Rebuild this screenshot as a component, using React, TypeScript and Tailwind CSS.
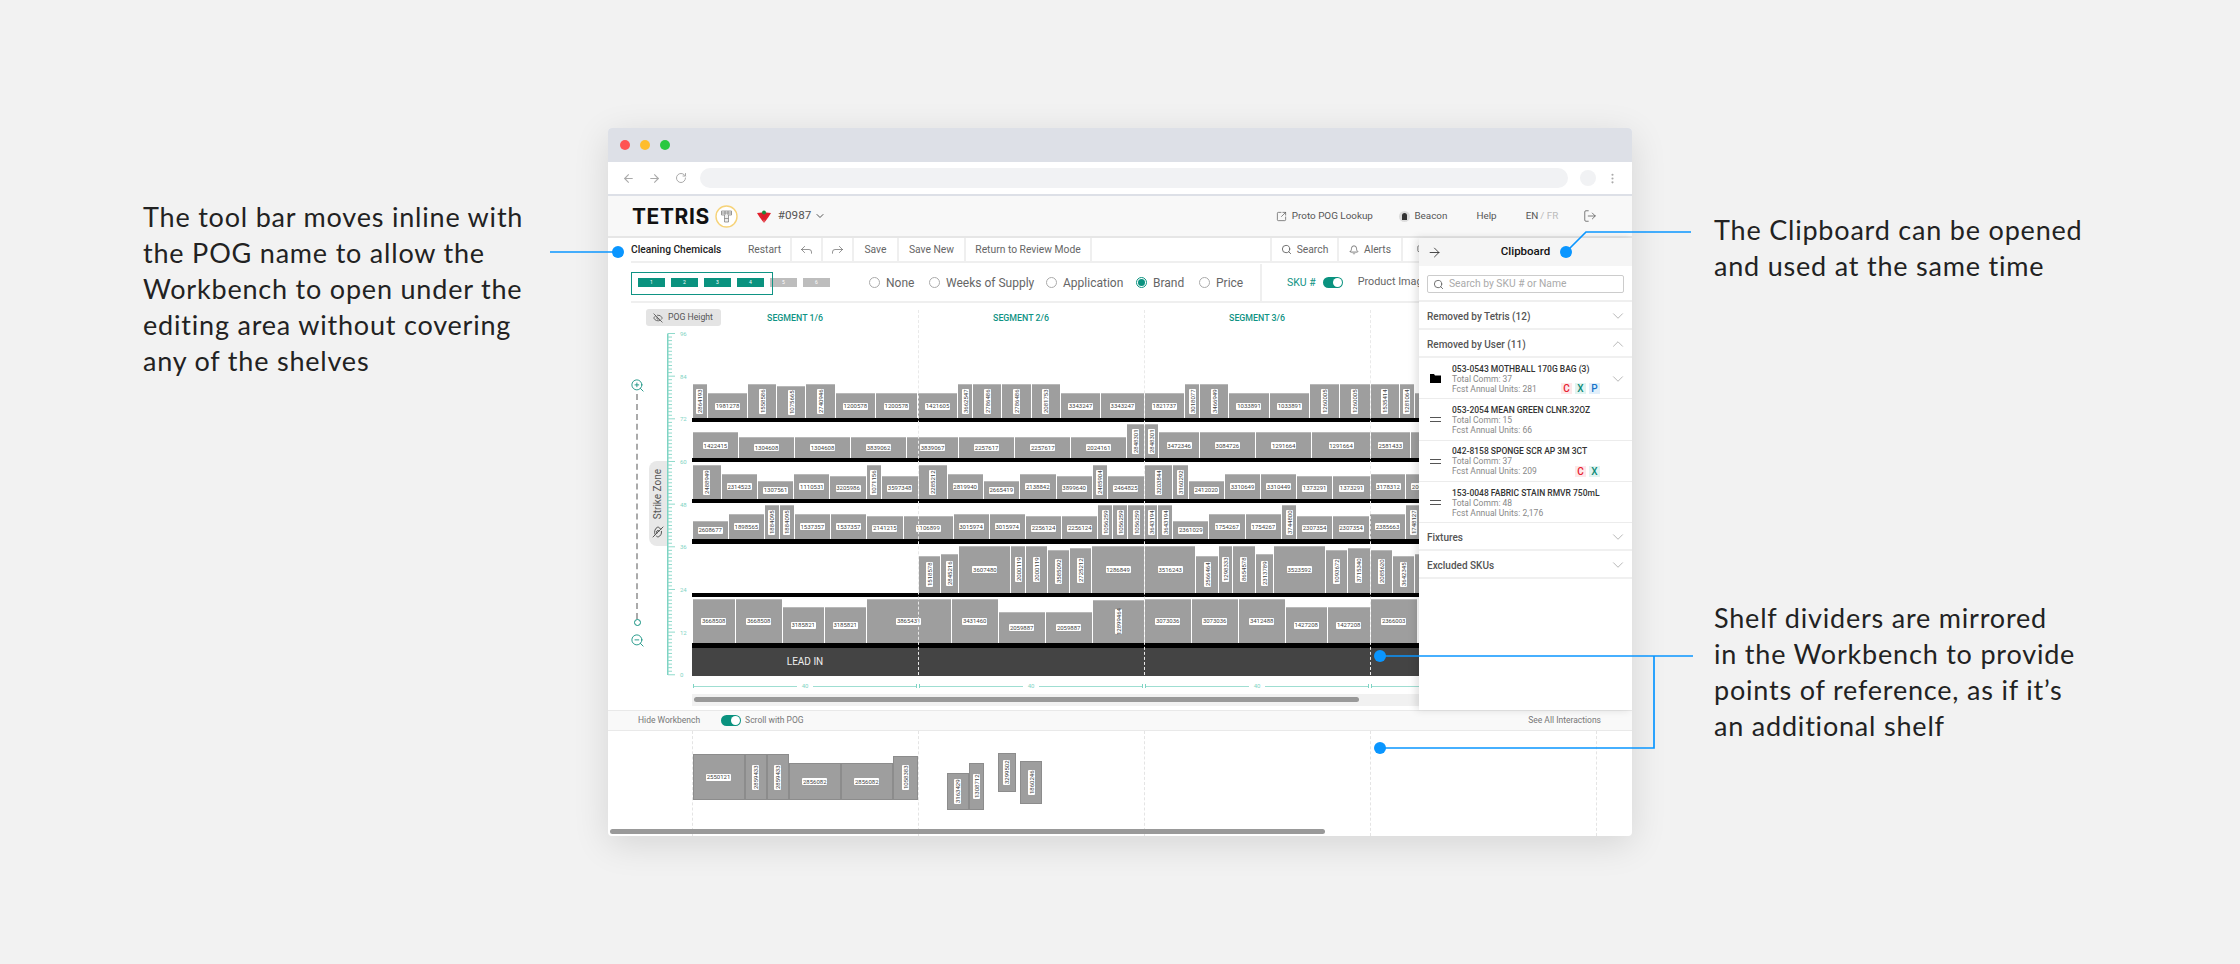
import { ArrowLeft, ArrowRight, Bell, ChevronDown, ChevronUp, Copy, EllipsisVertical, EyeOff, Forward, LogOut, Reply, RotateCw, Search, SquareArrowOutUpRight, ZoomIn, ZoomOut } from 'lucide-react'

type Bar = [number, number, string?, boolean?]

const shelves: { height: number; black: number; bars: Bar[] }[] = [
  {
    height: 85, black: 4,
    bars: [
      [15.3, 34, '2864193', true], [40, 25, '1981278'], [29.3, 34, '1558586', true], [29, 32, '1075665', true], [29.3, 34, '2740946', true], [40.3, 25, '1200578'], [42, 25, '1200578'],
      [40.3, 25, '1421605'], [15.3, 34, '3662547', true], [29, 34, '2786486', true], [29.3, 34, '2786486', true], [29.3, 34, '2081753', true], [40, 25, '3343247'], [43.7, 25, '3343247'],
      [40.3, 25, '1821737'], [15, 34, '3018077', true], [29.3, 34, '3466949', true], [40.3, 25, '1033891'], [40.7, 25, '1033891'], [29.3, 34, '1260005', true], [31, 34, '1260005', true],
      [29, 34, '1535414', true], [15.3, 34, '1281064', true], [40, 25],
    ],
  },
  {
    height: 36, black: 4,
    bars: [
      [46.3, 25.7, '1422415'], [56, 21.3, '1304608'], [56, 21.3, '1304608'], [56, 21.3, '3839062'], [52, 21.3, '3839067'], [56.3, 21.3, '2257617'], [56, 21.3, '2257617'], [56, 21.3, '2024161'], [17.5, 34, '2848301', true],
      [14.7, 34, '2848301', true], [40.3, 25.7, '3472346'], [56.3, 25.7, '3084726'], [56.3, 25.7, '1291664'], [58.4, 25.7, '1291664'],
      [40, 25.7, '2581433'], [30, 25.7],
    ],
  },
  {
    height: 37, black: 4,
    bars: [
      [29, 34, '2488949', true], [36, 25.3, '2314523'], [36.7, 18.3, '1307561'], [36, 25.3, '1110531'], [36.3, 22.7, '3205986'], [15, 34, '1071156', true], [37, 22.7, '3597348'],
      [29, 34, '2285212', true], [36, 25.3, '2819940'], [36.3, 18.3, '2665419'], [36.7, 25.3, '2138842'], [36, 22.7, '3899640'], [15, 34, '2485904', true], [37.3, 22.7, '2464825'],
      [28.3, 34, '3203844', true], [15.3, 34, '3160292', true], [36.3, 18.3, '2412020'], [36.3, 25.3, '3310649'], [36, 25.3, '3310449'], [36, 22.7, '1373291'], [38, 22.7, '1373291'],
      [35, 25.3, '3178312'], [36, 25.3, '2064471'],
    ],
  },
  {
    height: 36, black: 4.5,
    bars: [
      [36, 18.3, '2608677'], [36.3, 25.3, '1898565'], [14.7, 34, '1884095', true], [15, 34, '1884095', true], [36.3, 25.3, '1537357'], [36.3, 25.3, '1537357'], [36.3, 22.7, '2141215'], [50, 22.7, '1106899'],
      [36, 25.3, '3015974'], [36.3, 25.3, '3015974'], [36.3, 22.7, '2256124'], [36.3, 22.7, '2256124'], [15, 34, '1056259', true], [15, 34, '1056259', true], [16.7, 34, '1056259', true],
      [13, 34, '3643194', true], [15, 34, '3643194', true], [36.3, 18.3, '2361029'], [36.3, 25.3, '1754267'], [36.3, 25.3, '1754267'], [15, 34, '3744800', true], [36, 22.7, '2307354'], [37, 22.7, '2307354'],
      [36, 25.3, '2385663'], [15, 34, '1748127', true],
    ],
  },
  {
    height: 49, black: 4,
    bars: [
      [226, 0],
      [22, 37, '1518578', true], [18.7, 39, '2845216', true], [52, 46.3, '3607480'], [14.7, 46.3, '2000119', true], [22, 46.3, '2000119', true], [22, 42.7, '3585092', true], [22, 45, '2725212', true], [53, 46.3, '1286849'],
      [51.3, 46.3, '3516243'], [22.3, 37, '2566464', true], [14.7, 46.3, '1298333', true], [22.3, 46.3, '8654578', true], [18.3, 39, '2313789', true], [51.7, 46.3, '3523592'], [22.3, 43, '1093672', true], [23, 45, '3715340', true],
      [21.7, 42.7, '2085620', true], [22, 37, '3642345', true], [22, 39],
    ],
  },
  {
    height: 46, black: 5,
    bars: [
      [43, 44, '3668508'], [47, 44, '3668508'], [42, 35.3, '3185821'], [42, 35.3, '3185821'], [85, 44, '3865431'], [47, 44, '3431460'], [47, 30.3, '2059887'], [47, 30.3, '2059887'], [52, 42.7, '12899464', true],
      [47, 44, '3073036'], [47, 44, '3073036'], [47, 44, '3412488'], [42, 35.3, '1427208'], [43, 35.3, '1427208'], [47, 44, '2366003'],
    ],
  },
]

// workbench sits on a free canvas, so these keep their own place
const loose = [
  { x: 692.5, y: 754, w: 52, h: 46, label: '2550121' },
  { x: 745, y: 754, w: 21.5, h: 46, label: '2859433', v: true },
  { x: 767, y: 754, w: 21.5, h: 46, label: '2859433', v: true },
  { x: 789, y: 763, w: 51.5, h: 37, label: '2856082' },
  { x: 841, y: 763, w: 51.5, h: 37, label: '2856082' },
  { x: 893, y: 755.5, w: 25, h: 44.5, label: '1058383', v: true },
  { x: 947, y: 773, w: 21.5, h: 37, label: '3163429', v: true },
  { x: 969, y: 763, w: 14.5, h: 47, label: '1308712', v: true },
  { x: 997.5, y: 753, w: 18, h: 39, label: '3299502', v: true },
  { x: 1020, y: 761, w: 22, h: 43, label: '1860246', v: true },
]

const ticks = Array.from({ length: 97 }, (_, i) => i)

function Label({ text, v }: { text: string; v?: boolean }) {
  return (
    <span className={v
      ? 'flex w-[7px] h-[25px] items-center justify-center bg-white rounded-[1px] text-[6px] leading-none text-[#444] [writing-mode:vertical-rl] rotate-180 whitespace-nowrap'
      : 'flex w-[25px] h-[7px] items-center justify-center bg-white rounded-[1px] text-[6px] leading-none text-[#444] whitespace-nowrap'}>
      {text}
    </span>
  )
}

function Shelf({ height, black, bars }: { height: number; black: number; bars: Bar[] }) {
  return (
    <div>
      <div className="flex items-end pl-[0.7px] overflow-hidden" style={{ height }}>
        {bars.map(([w, h, label, v], i) => (
          <div key={i} className="shrink-0 pr-px" style={{ width: w, height: h }}>
            {h > 0 && (
              <div className="h-full bg-[#9e9e9e] border-t border-[#b8b8b8] flex items-center justify-center">
                {label && <Label text={label} v={v} />}
              </div>
            )}
          </div>
        ))}
      </div>
      <div className="bg-black" style={{ height: black }} />
    </div>
  )
}

function Radio({ label, on, className }: { label: string; on?: boolean; className: string }) {
  return (
    <div className={`flex items-center gap-[6px] ${className}`}>
      <span className={`w-[11px] h-[11px] rounded-full border flex items-center justify-center ${on ? 'border-[#0a927f]' : 'border-[#aaa]'}`}>
        {on && <span className="w-[7px] h-[7px] rounded-full bg-[#0a927f]" />}
      </span>
      <span className="text-[12px] text-[#666]">{label}</span>
    </div>
  )
}

function Toggle() {
  return (
    <span className="flex justify-end items-center w-[20px] h-[11px] rounded-full bg-[#0a927f] pr-px">
      <span className="w-[9px] h-[9px] rounded-full bg-white" />
    </span>
  )
}

function Cell({ children, className }: { children: React.ReactNode; className: string }) {
  return <div className={`flex items-center justify-center gap-[5px] h-full border-r-2 border-[#efefef] text-[10.3px] text-[#666] ${className}`}>{children}</div>
}

function Badge({ c }: { c: 'C' | 'X' | 'P' }) {
  const tone = c === 'C' ? 'bg-[#fde8ea] text-[#e8202e]' : c === 'X' ? 'bg-[#e2f4f1] text-[#0a8a78]' : 'bg-[#e1effb] text-[#1673c9]'
  return <span className={`w-[11px] h-[11px] flex items-center justify-center text-[10px] font-medium ${tone}`}>{c}</span>
}

function Section({ title, open }: { title: string; open?: boolean }) {
  return (
    <div className="flex items-center justify-between h-[28px] pl-[8px] pr-[5px] pt-[2px] border-b-2 border-[#f0f0f0]">
      <span className="text-[10px] font-medium text-[#555]">{title}</span>
      {open
        ? <ChevronUp size={18} strokeWidth={0.8} className="text-[#888]" />
        : <ChevronDown size={18} strokeWidth={0.8} className="text-[#888]" />}
    </div>
  )
}

function Item({ title, comm, units, folder, badges, chevron }: { title: string; comm: string; units: string; folder?: boolean; badges?: ('C' | 'X' | 'P')[]; chevron?: boolean }) {
  return (
    <div className="relative flex items-center h-[41.3px] pt-px border-b border-[#ececec] pl-[11px]">
      <span className="w-[22px]">
        {folder ? (
          <svg width="11" height="9" viewBox="0 0 11 9"><path d="M0 0h4l1 1.500h6V9H0z" fill="#000" /></svg>
        ) : (
          <span className="block w-[11px] h-[5px] border-y-[1.5px] border-[#555]" />
        )}
      </span>
      <div className="text-[8.5px] leading-[10px]">
        <div className="font-medium text-[#333] whitespace-nowrap">{title}</div>
        <div className="text-[#888]">Total Comm: {comm}</div>
        <div className="text-[#888]">Fcst Annual Units: {units}</div>
      </div>
      {badges && (
        <div className="absolute right-[32px] bottom-[4px] flex gap-[3px]">
          {badges.map(b => <Badge key={b} c={b} />)}
        </div>
      )}
      {chevron && <ChevronDown size={18} strokeWidth={0.8} className="absolute right-[5px] top-[12px] text-[#888]" />}
    </div>
  )
}

function Measure({ w }: { w: number }) {
  return (
    <div className="flex items-center shrink-0 h-[4px] border-x border-[#7fd4c4]" style={{ width: w }}>
      <span className="flex-1 h-px bg-[#9fded2]" />
      <span className="px-[5px] text-[6px] leading-none text-[#7fd4c4]">40</span>
      <span className="flex-1 h-px bg-[#9fded2]" />
    </div>
  )
}

function Annotation({ lines, className }: { lines: string[]; className: string }) {
  return (
    <div className={`font-[Lato] text-[27px] tracking-[0.8px] leading-[36px] text-[#222] whitespace-nowrap ${className}`}>
      {lines.map(l => <div key={l}>{l}</div>)}
    </div>
  )
}

export default function App() {
  return (
    <div className="relative flex w-[2240px] h-[964px] bg-[#f2f2f2] overflow-hidden font-[Roboto]">
      <div className="w-[608px] shrink-0 pl-[143px]">
        <Annotation className="mt-[199px]" lines={['The tool bar moves inline with', 'the POG name to allow the', 'Workbench to open under the', 'editing area without covering', 'any of the shelves']} />
      </div>

      {/* browser window */}
      <div className="mt-[128px] w-[1024px] h-[708px] shrink-0 flex flex-col bg-white rounded-[4px] overflow-hidden shadow-[0_8px_36px_rgba(0,0,0,0.12)]">
        <div className="flex items-center gap-[10px] h-[34px] bg-[#dde0e7] pl-[12px]">
          <span className="w-[10px] h-[10px] rounded-full bg-[#ff5252]" />
          <span className="w-[10px] h-[10px] rounded-full bg-[#ffbd2e]" />
          <span className="w-[10px] h-[10px] rounded-full bg-[#28c840]" />
        </div>
        <div className="flex items-center h-[34px] border-b-2 border-[#dde0e7] pl-[14px] text-[#aaa]">
          <ArrowLeft size={13} />
          <ArrowRight size={13} className="ml-[13px]" />
          <RotateCw size={12} className="ml-[14px]" />
          <div className="w-[868px] h-[20px] ml-[13px] rounded-full bg-[#f1f2f4]" />
          <span className="w-[16px] h-[16px] ml-[12px] rounded-full bg-[#f1f2f4]" />
          <EllipsisVertical size={13} className="ml-[10px]" />
        </div>

        {/* app header */}
        <div className="flex items-center h-[42px] bg-[#f8f8f8] border-b-2 border-[#e6e6e6] pl-[24px] text-[9.9px] text-[#555] whitespace-nowrap">
          <span className="text-[21px] leading-none font-bold tracking-[0.6px] text-[#111] font-[Inter]">TETRIS</span>
          <svg width="23" height="23" viewBox="0 0 23 23" className="ml-[5px] shrink-0">
            <circle cx="11.5" cy="11.5" r="10.5" fill="#fff" stroke="#f6d37a" strokeWidth="1.4" />
            <path d="M6.5 6h10v4h-3v7h-4v-7h-3zM6.5 8h10M10 6v4M13 6v4M9.5 13.5h4" fill="#eee" stroke="#777" strokeWidth="0.7" />
          </svg>
          <svg width="14" height="13" viewBox="0 0 14 13" className="ml-[19px] shrink-0">
            <path d="M0 3l5 -.5L7 13 2.5 7zM14 3l-5 -.5L7 13l4.500 -6z" fill="#e2202c" />
            <path d="M3.500 3h7L7 12z" fill="#d81e28" />
            <circle cx="7" cy="2.500" r="2" fill="#1d8a3b" />
          </svg>
          <span className="ml-[7px] text-[11.7px]">#0987</span>
          <ChevronDown size={12} className="ml-[3px] shrink-0" />
          <SquareArrowOutUpRight size={11} strokeWidth={1.5} className="ml-[450px] shrink-0" />
          <span className="ml-[4.5px]">Proto POG Lookup</span>
          <span className="ml-[26px] flex items-center justify-center w-[11px] h-[11px] rounded-full bg-[#ddd]">
            <span className="w-[5px] h-[7px] rounded-t-full bg-[#333]" />
          </span>
          <span className="ml-[4.5px]">Beacon</span>
          <span className="ml-[29px]">Help</span>
          <span className="ml-[29px]">EN</span>
          <span className="ml-[2px] text-[#bbb]">/ FR</span>
          <LogOut size={14} strokeWidth={1.3} className="ml-[25px] shrink-0" />
        </div>

        {/* editor */}
        <div className="relative h-[472px] flex flex-col">
          <div className="flex items-center h-[25px] ml-[23px] border-b-2 border-[#efefef]">
            <span className="w-[117px] text-[10.2px] font-medium text-[#222] whitespace-nowrap">Cleaning Chemicals</span>
            <Cell className="w-[44px] justify-start">Restart</Cell>
            <Cell className="w-[31px]"><Reply size={15} strokeWidth={1.1} /></Cell>
            <Cell className="w-[31px]"><Forward size={15} strokeWidth={1.1} /></Cell>
            <Cell className="w-[45px]">Save</Cell>
            <Cell className="w-[67px]">Save New</Cell>
            <Cell className="w-[126px] whitespace-nowrap">Return to Review Mode</Cell>
            <div className="w-[180px] h-full border-r-2 border-[#efefef]" />
            <Cell className="w-[67px]"><Search size={11} />Search</Cell>
            <Cell className="w-[64px]"><Bell size={10} />Alerts</Cell>
            <Cell className="w-[40px]"><Copy size={10} /></Cell>
          </div>

          <div className="flex items-center h-[40px] ml-[23px] pt-px border-b-2 border-[#efefef]">
            <div className="relative flex items-center gap-[6px] w-[237px] pl-[7px] h-full">
              {['1', '2', '3', '4', '5', '6'].map((n, i) => (
                <span key={n} className={`flex items-center justify-center w-[27px] h-[9px] text-[5px] text-white ${i < 4 ? 'bg-[#0a927f]' : 'bg-[#bdbdbd]'}`}>{n}</span>
              ))}
              <span className="absolute left-0 top-[8px] w-[142px] h-[23px] border-[1.5px] border-[#0f9384]" />
            </div>
            <Radio label="None" className="w-[60px] ml-[1px]" />
            <Radio label="Weeks of Supply" className="w-[117px]" />
            <Radio label="Application" className="w-[90px]" />
            <Radio label="Brand" on className="w-[63px]" />
            <Radio label="Price" className="w-[55px]" />
            <div className="flex items-center h-full ml-[6px] pl-[25px] border-l-2 border-[#efefef] whitespace-nowrap">
              <span className="text-[10.5px] text-[#0f9384]">SKU #</span>
              <span className="ml-[7px]"><Toggle /></span>
              <span className="ml-[15px] text-[10.8px] text-[#666]">Product Images</span>
            </div>
          </div>

          <div className="relative flex flex-1 overflow-hidden">
            {/* left rail */}
            <div className="w-[84px] shrink-0 flex flex-col">
              <div className="flex items-center gap-[5px] w-[75px] h-[17px] ml-[38px] mt-[6px] pl-[7px] rounded-[3px] bg-[#e4e4e4] text-[8.7px] text-[#555]">
                <EyeOff size={10} />POG Height
              </div>
              <div className="flex mt-[7px]">
                <div className="flex flex-col items-center w-[16px] ml-[21px] mt-[45px] text-[#0f8f7e]">
                  <ZoomIn size={15} strokeWidth={1.4} />
                  <span className="h-[225px] mt-[1px] border-l-2 border-dashed border-[#aaa]" />
                  <span className="w-[7px] h-[7px] rounded-full border-[1.4px] border-[#0f8f7e]" />
                  <ZoomOut size={15} strokeWidth={1.4} className="mt-[7px]" />
                </div>
                <div className="flex flex-col items-center justify-center gap-[6px] w-[18px] h-[85px] ml-[4px] mt-[128px] rounded-l-[8px] bg-[#e8e8e8] text-[#555]">
                  <span className="text-[10px] leading-none whitespace-nowrap [writing-mode:vertical-rl] rotate-180">Strike Zone</span>
                  <EyeOff size={12} className="rotate-90" />
                </div>
                <svg width="25" height="345" viewBox="0 0 25 345" className="shrink-0 overflow-visible">
                  <path d="M.75 .5V342" stroke="#7fd4c4" strokeWidth="1.500" fill="none" />
                  {ticks.map(i => (
                    <path key={i} d={`M1 ${0.5 + i * 3.555}h${i % 12 === 0 ? 7 : 4}`} stroke="#8fdacb" strokeWidth="1" />
                  ))}
                  {['96', '84', '72', '60', '48', '36', '24', '12', '0'].map((t, i) => (
                    <text key={t} x="13" y={3 + i * 42.66} fontSize="6" fill="#7fd4c4">{t}</text>
                  ))}
                </svg>
              </div>
            </div>

            {/* shelves */}
            <div className="relative flex-1 min-w-0 flex flex-col">
              <div className="flex items-center h-[30px] pl-[69px] pt-[1px] text-[8.8px] font-medium text-[#0f9384] text-center whitespace-nowrap">
                <span className="w-[68px]">SEGMENT 1/6</span>
                <span className="w-[68px] ml-[158px]">SEGMENT 2/6</span>
                <span className="w-[68px] ml-[168px]">SEGMENT 3/6</span>
              </div>
              {shelves.map((s, i) => <Shelf key={i} {...s} />)}
              <div className="flex items-center justify-center h-[28px] bg-[#444] text-[10px] text-[#eee] pr-[714px]">LEAD IN</div>
              <div className="flex items-center gap-[2px] h-[18px] pl-[1px] pt-[3px]">
                <Measure w={224} />
                <Measure w={224} />
                <Measure w={224} />
                <Measure w={224} />
              </div>
              <div className="flex items-center w-[727px] h-[12px] bg-[#f1f1f1] pl-[2px]">
                <span className="w-[665px] h-[5px] rounded-full bg-[#999]" />
              </div>
              {[226, 452, 678].map(x => (
                <span key={x} className="absolute top-[7px] h-[365px] border-l-[1.5px] border-dashed border-[#e9e9e9]" style={{ left: x }} />
              ))}
            </div>
          </div>

          {/* clipboard */}
          <div className="absolute right-0 top-0 bottom-0 w-[213px] bg-white shadow-[-3px_0_8px_rgba(0,0,0,0.12)]">
            <div className="relative flex items-center justify-center h-[28px] bg-[#f5f5f5]">
              <ArrowRight size={15} strokeWidth={1.3} className="absolute left-[8px] text-[#222]" />
              <span className="text-[11.5px] font-medium text-[#111]">Clipboard</span>
            </div>
            <div className="h-[36px] px-[8px] pt-[9px] border-b-2 border-[#efefef]">
              <div className="flex items-center gap-[5px] h-[18px] pl-[5px] border border-[#ccc] rounded-[2px] text-[10.3px] text-[#aaa]">
                <Search size={11} className="text-[#666]" />Search by SKU # or Name
              </div>
            </div>
            <Section title="Removed by Tetris (12)" />
            <Section title="Removed by User (11)" open />
            <Item folder chevron title="053-0543 MOTHBALL 170G BAG (3)" comm="37" units="281" badges={['C', 'X', 'P']} />
            <Item title="053-2054 MEAN GREEN CLNR.32OZ" comm="15" units="66" />
            <Item title="042-8158 SPONGE SCR AP 3M 3CT" comm="37" units="209" badges={['C', 'X']} />
            <Item title="153-0048 FABRIC STAIN RMVR 750mL" comm="48" units="2,176" />
            <Section title="Fixtures" />
            <Section title="Excluded SKUs" />
          </div>
        </div>

        {/* workbench */}
        <div className="flex items-center h-[21px] bg-[#f9f9f9] border-y border-[#e9e9e9] pl-[30px] pr-[31px] text-[8.5px] text-[#777]">
          <span>Hide Workbench</span>
          <span className="ml-[21px] mr-[4px]"><Toggle /></span>
          <span>Scroll with POG</span>
          <span className="ml-auto">See All Interactions</span>
        </div>
        <div className="relative flex-1">
          {[692, 918, 1144, 1370, 1596].map(x => (
            <span key={x} className="absolute top-0 bottom-0 border-l border-dashed border-[#e4e4e4]" style={{ left: x - 608 }} />
          ))}
          {loose.map((b, i) => (
            <div key={i} className="absolute flex items-center justify-center bg-[#9e9e9e] border border-[#8c8c8c]" style={{ left: b.x - 608, top: b.y - 731, width: b.w, height: b.h }}>
              <Label text={b.label} v={b.v} />
            </div>
          ))}
          <span className="absolute left-[2px] bottom-[2px] w-[715px] h-[5px] rounded-full bg-[#999]" />
        </div>
      </div>

      <div className="flex-1 flex flex-col pl-[82px]">
        <Annotation className="mt-[212px]" lines={['The Clipboard can be opened', 'and used at the same time']} />
        <Annotation className="mt-[316px]" lines={['Shelf dividers are mirrored', 'in the Workbench to provide', "points of reference, as if it’s", 'an additional shelf']} />
      </div>

      {/* callout lines over everything */}
      <svg className="absolute inset-0 pointer-events-none" width="2240" height="964" viewBox="0 0 2240 964">
        <g fill="none" stroke="#0a96ff" strokeWidth="1.7">
          <path d="M550 252H618" />
          <path d="M1566 252L1586 232H1691" />
          <path d="M1380 656H1693" />
          <path d="M1380 748H1654V656" />
        </g>
        <g fill="#0a96ff">
          <circle cx="618" cy="252" r="6" />
          <circle cx="1566" cy="252" r="6" />
          <circle cx="1380" cy="656" r="6" />
          <circle cx="1380" cy="748" r="6" />
        </g>
      </svg>
    </div>
  )
}
